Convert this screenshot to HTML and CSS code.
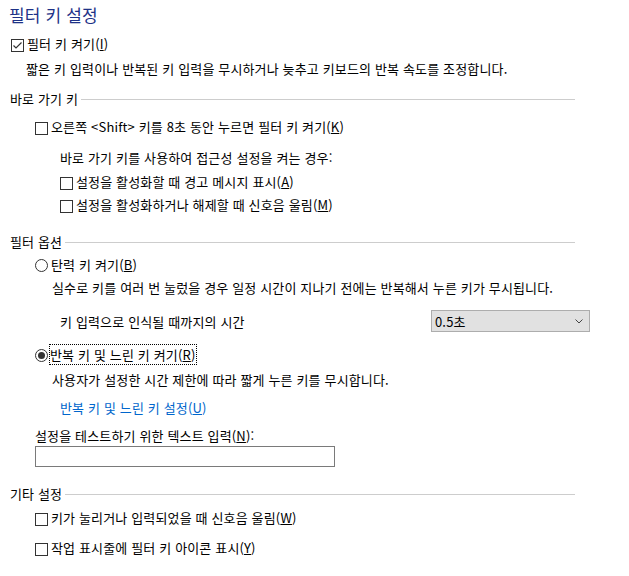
FILE: index.html
```html
<!DOCTYPE html>
<html lang="ko">
<head>
<meta charset="utf-8">
<link rel="stylesheet" href="styles.css">
</head>
<body>
<div class="page">
  <h1 class="title">필터 키 설정</h1>

  <div class="row lv0 r-main"><span class="cb"><svg viewBox="0 0 11 11" width="11" height="11"><polyline points="1.5,5.5 4,8 9.5,2.5" fill="none" stroke="#333" stroke-width="1.2"/></svg></span><span class="lbl">필터 키 켜기(<u>I</u>)</span></div>
  <p class="txt d-main">짧은 키 입력이나 반복된 키 입력을 무시하거나 늦추고 키보드의 반복 속도를 조정합니다.</p>

  <div class="hdr h1">바로 가기 키<span class="rule"></span></div>
  <div class="row lv1 r-shift"><span class="cb"></span><span class="lbl">오른쪽 &lt;Shift&gt; 키를 8초 동안 누르면 필터 키 켜기(<u>K</u>)</span></div>
  <p class="txt note">바로 가기 키를 사용하여 접근성 설정을 켜는 경우:</p>
  <div class="row lv2 r-warn"><span class="cb"></span><span class="lbl">설정을 활성화할 때 경고 메시지 표시(<u>A</u>)</span></div>
  <div class="row lv2 r-sound"><span class="cb"></span><span class="lbl">설정을 활성화하거나 해제할 때 신호음 울림(<u>M</u>)</span></div>

  <div class="hdr h2">필터 옵션<span class="rule"></span></div>
  <div class="row lv1 r-bounce"><span class="rb"></span><span class="lbl">탄력 키 켜기(<u>B</u>)</span></div>
  <p class="txt d-opt d-bounce">실수로 키를 여러 번 눌렀을 경우 일정 시간이 지나기 전에는 반복해서 누른 키가 무시됩니다.</p>
  <div class="time-row">
    <span class="time-lbl">키 입력으로 인식될 때까지의 시간</span>
    <div class="select"><span>0.5초</span><svg viewBox="0 0 8 5" width="8" height="5"><polyline points="0.5,0.5 4,4 7.5,0.5" fill="none" stroke="#444" stroke-width="1"/></svg></div>
  </div>
  <div class="row lv1 r-repeat"><span class="rb on"><span class="dot"></span></span><span class="lbl focus">반복 키 및 느린 키 켜기(<u>R</u>)</span></div>
  <p class="txt d-opt d-repeat">사용자가 설정한 시간 제한에 따라 짧게 누른 키를 무시합니다.</p>
  <a class="link" href="#">반복 키 및 느린 키 설정(<u>U</u>)</a>
  <p class="txt test-lbl">설정을 테스트하기 위한 텍스트 입력(<u>N</u>):</p>
  <div class="input"></div>

  <div class="hdr h3">기타 설정<span class="rule"></span></div>
  <div class="row lv1 r-o1"><span class="cb"></span><span class="lbl">키가 눌리거나 입력되었을 때 신호음 울림(<u>W</u>)</span></div>
  <div class="row lv1 r-o2"><span class="cb"></span><span class="lbl">작업 표시줄에 필터 키 아이콘 표시(<u>Y</u>)</span></div>
</div>
</body>
</html>
```

FILE: styles.css
```css
* { box-sizing: border-box; }
html, body { margin: 0; padding: 0; background: #fff; }
body {
  font-family: "Malgun Gothic", "Noto Sans CJK KR", "Noto Sans", sans-serif;
  font-size: 13px;
  letter-spacing: 0.15px;
  color: #000;
  width: 629px;
  height: 576px;
  overflow: hidden;
}
.page { padding-top: 4px; }
u { text-decoration: underline; text-underline-offset: 1px; }

.title {
  margin: 0 0 0 9px;
  font-size: 17px;
  font-weight: normal;
  line-height: 22px;
  height: 22px;
  color: #1e3287;
}

.row {
  display: flex;
  align-items: center;
  height: 18px;
  line-height: 18px;
  white-space: nowrap;
}
.lv0 { margin-left: 11px; }
.lv1 { margin-left: 35px; }
.lv2 { margin-left: 60px; }

.cb {
  width: 13px;
  height: 13px;
  border: 1px solid #333;
  background: #fff;
  flex: none;
  margin-right: 3px;
  margin-top: 2px;
  display: flex;
  align-items: center;
  justify-content: center;
}
.rb {
  width: 13px;
  height: 13px;
  border: 1px solid #333;
  border-radius: 50%;
  background: #fff;
  flex: none;
  margin-right: 3px;
  margin-top: 1px;
  display: flex;
  align-items: center;
  justify-content: center;
}
.rb .dot {
  width: 7px;
  height: 7px;
  border-radius: 50%;
  background: #333;
}
.lbl { display: inline-block; }
.lbl.focus {
  outline: 1px dotted #000;
  outline-offset: 0;
  line-height: 19px;
  height: 19px;
  padding: 0 1px 0 0;
  margin-left: -1px;
}

.txt {
  margin: 0;
  height: 18px;
  line-height: 18px;
  white-space: nowrap;
}

.hdr {
  display: flex;
  align-items: center;
  height: 18px;
  line-height: 18px;
  margin-left: 10px;
  width: 565px;
  white-space: nowrap;
}
.rule {
  flex: 1;
  height: 1px;
  background: #cdcdcd;
  margin-left: 3px;
  margin-top: 1px;
}

/* vertical rhythm */
.r-main { margin-top: 9px; }
.d-main { margin: 7px 0 0 26px; }
.h1 { margin-top: 12px; }
.r-shift { margin-top: 10px; }
.note { margin: 13px 0 0 60px; }
.r-warn { margin-top: 6px; }
.r-sound { margin-top: 5px; }
.h2 { margin-top: 19px; }
.r-bounce { margin-top: 5px; }
.d-opt { margin-left: 52px; }
.d-bounce { margin-top: 5px; }

.time-row {
  display: flex;
  align-items: center;
  margin-top: 13px;
  height: 22px;
  padding-left: 60px;
}
.time-lbl { flex: none; width: 371px; }
.select {
  width: 159px;
  height: 22px;
  border: 1px solid #adadad;
  background: #e1e1e1;
  display: flex;
  align-items: center;
  justify-content: space-between;
  padding: 0 6px 0 3px;
}

.r-repeat { margin-top: 13px; height: 19px; }
.d-repeat { margin-top: 7px; }
.link {
  display: block;
  margin: 10px 0 0 60px;
  height: 18px;
  line-height: 18px;
  color: #0066cc;
  text-decoration: none;
  width: max-content;
}
.test-lbl { margin: 10px 0 0 35px; }
.input {
  margin: 1px 0 0 35px;
  width: 300px;
  height: 21px;
  border: 1px solid #7a7a7a;
  background: #fff;
}
.h3 { margin-top: 18px; }
.r-o1 { margin-top: 6px; }
.r-o2 { margin-top: 12px; }
```
